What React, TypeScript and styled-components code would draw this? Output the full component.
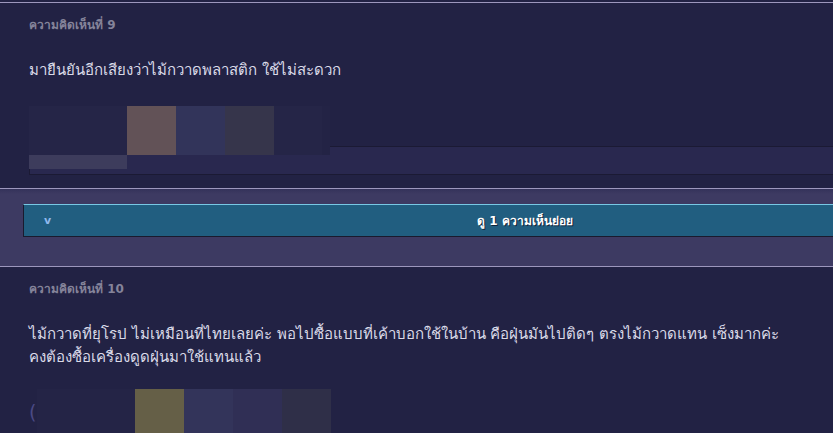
import React from "react";
import styled, { createGlobalStyle } from "styled-components";

const Global = createGlobalStyle`
  html, body { margin: 0; padding: 0; background: #222244; overflow: hidden; }
  body { font-family: Tahoma, "DejaVu Sans", "Noto Sans", sans-serif; }
`;

const Page = styled.div`
  width: 833px;
  height: 433px;
  display: flex;
  flex-direction: column;
  background: #222244;
  padding-top: 2px;
  box-sizing: border-box;
  overflow: hidden;
`;

const Divider = styled.div`
  height: 1px;
  flex: none;
  background: #9d97bd;
`;

const Comment = styled.section<{ $h: number }>`
  height: ${(p) => p.$h}px;
  flex: none;
  display: flex;
  flex-direction: column;
  padding: 14px 0 0 29px;
  box-sizing: border-box;
  background: #222244;
`;

const Label = styled.div`
  font-size: 12px;
  line-height: 16px;
  font-weight: bold;
  color: #85849a;
`;

const Body = styled.p<{ $mt: number }>`
  margin: ${(p) => p.$mt}px 0 0 0;
  font-size: 15px;
  line-height: 23px;
  color: #dadae8;
  padding-right: 20px;
`;

const Preview = styled.div`
  position: relative;
  margin-top: 24px;
  height: 68px;
`;

const LinkBar = styled.div`
  margin-top: 40px;
  height: 27px;
  background: #29284f;
  border: 1px solid #1b1a34;
  border-right: none;
`;

const Thumb = styled.div`
  position: absolute;
  left: 0;
  top: 0;
  display: flex;
  flex-direction: column;
`;

const TileRow = styled.div`
  display: flex;
`;

const Tile = styled.div<{ $c: string; $w?: number; $h?: number }>`
  width: ${(p) => p.$w ?? 49}px;
  height: ${(p) => p.$h ?? 49}px;
  background: ${(p) => p.$c};
`;

const ReplyZone = styled.div`
  height: 77px;
  flex: none;
  background: linear-gradient(#34325a 0px, #3d3a62 5px, #3d3a62 100%);
  padding: 15px 0 0 23px;
  box-sizing: border-box;
`;

const ReplyButton = styled.button`
  display: flex;
  align-items: center;
  width: 1004px;
  height: 33px;
  padding: 0;
  background: #215e80;
  border: 1px solid #1a1a2e;
  border-top: 1px solid #78c8e4;
  box-sizing: border-box;
  cursor: pointer;
  position: relative;
  font-family: inherit;
`;

const Chevron = styled.span`
  position: absolute;
  left: 20px;
  top: 9px;
  font-size: 11px;
  font-weight: bold;
  color: #8fb8ec;
  font-family: "DejaVu Sans", sans-serif;
`;

const ReplyText = styled.span`
  flex: 1;
  text-align: center;
  font-size: 12px;
  font-weight: bold;
  color: #ffffff;
  text-shadow: 1px 1px 0 #10243a;
`;

const Media = styled.div`
  margin-top: 20px;
  display: flex;
  align-items: flex-start;
  height: 60px;
`;

const Paren = styled.span`
  font-family: "DejaVu Sans", sans-serif;
  font-size: 19px;
  line-height: 20px;
  color: #4b4a85;
  margin-top: 13px;
  width: 8px;
`;

const Spacer = styled.div`
  width: 98px;
  height: 60px;
  background: #242446;
`;

export default function App() {
  return (
    <Page>
      <Global />
      <Divider />
      <Comment $h={185}>
        <Label>ความคิดเห็นที่ 9</Label>
        <Body $mt={26}>มายืนยันอีกเสียงว่าไม้กวาดพลาสติก ใช้ไม่สะดวก</Body>
        <Preview>
          <LinkBar />
          <Thumb>
            <TileRow>
              <Tile $c="#252547" $w={98} />
              <Tile $c="#625257" />
              <Tile $c="#32345a" />
              <Tile $c="#36354b" />
              <Tile $c="#252547" $w={48} />
              <Tile $c="#232345" $w={8} />
            </TileRow>
            <TileRow>
              <Tile $c="#3d3c5c" $w={98} $h={14} />
            </TileRow>
          </Thumb>
        </Preview>
      </Comment>
      <Divider />
      <ReplyZone>
        <ReplyButton>
          <Chevron>v</Chevron>
          <ReplyText>ดู 1 ความเห็นย่อย</ReplyText>
        </ReplyButton>
      </ReplyZone>
      <Divider />
      <Comment $h={200}>
        <Label>ความคิดเห็นที่ 10</Label>
        <Body $mt={26}>
          ไม้กวาดที่ยุโรป ไม่เหมือนที่ไทยเลยค่ะ พอไปซื้อแบบที่เค้าบอกใช้ในบ้าน คือฝุ่นมันไปติดๆ ตรงไม้กวาดแทน เซ็งมากค่ะ
          <br />
          คงต้องซื้อเครื่องดูดฝุ่นมาใช้แทนแล้ว
        </Body>
        <Media>
          <Paren>(</Paren>
          <Spacer />
          <Tile $c="#655f47" $h={60} />
          <Tile $c="#33345a" $h={60} />
          <Tile $c="#302f55" $h={60} />
          <Tile $c="#2f2f48" $h={60} />
        </Media>
      </Comment>
    </Page>
  );
}
